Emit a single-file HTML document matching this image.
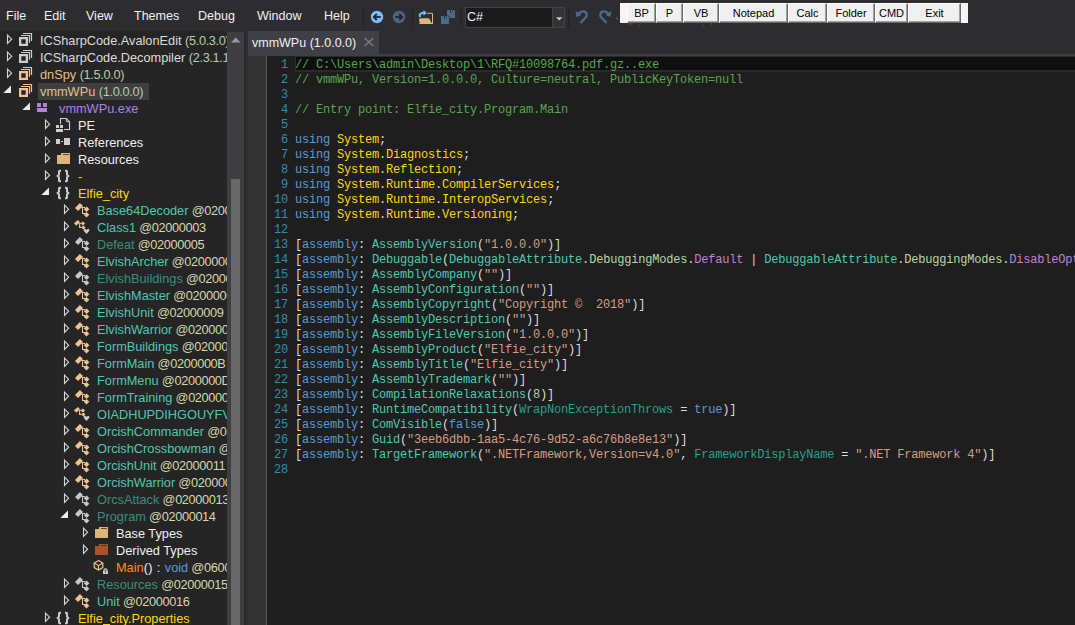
<!DOCTYPE html>
<html><head><meta charset="utf-8">
<style>
*{margin:0;padding:0;box-sizing:border-box}
html,body{width:1075px;height:625px;overflow:hidden;background:#2d2d30}
body{position:relative;font-family:"Liberation Sans",sans-serif;font-size:12.5px;color:#f1f1f1}
.a{position:absolute}
svg{overflow:visible}
.menu{position:absolute;top:7px;height:18px;line-height:18px;font-size:12.5px;color:#f1f1f1;white-space:nowrap}
.sep{position:absolute;top:8px;width:1px;height:19px;background:#222225}
/* tree */
#tree{position:absolute;left:0;top:31px;width:227px;height:594px;background:#252526;overflow:hidden}
.r{position:absolute;height:17px;line-height:17px;white-space:nowrap;font-size:12.75px}
.tk{letter-spacing:-0.35px}
/* scrollbar */
#sb{position:absolute;left:227px;top:32px;width:17px;height:593px;background:#3e3e42}
#thumb{position:absolute;left:4px;top:147px;width:9px;height:460px;background:#686868}
/* editor */
#tab{position:absolute;left:248px;top:31px;width:131px;height:25px;background:#3f3f46}
#tabline{position:absolute;left:248px;top:54px;width:827px;height:2px;background:#3f3f46}
#ed{position:absolute;left:248px;top:56px;width:827px;height:569px;background:#1e1e1e;overflow:hidden}
#margin{position:absolute;left:0;top:0;width:18px;height:569px;background:#333333}
#mline{position:absolute;left:18px;top:0;width:1px;height:569px;background:#5a5a5a}
.ln{position:absolute;left:19px;width:21px;text-align:right;color:#2b91af}
.cl{position:absolute;left:47px;white-space:pre;color:#dcdcdc}
.code{font-family:"Liberation Mono",monospace;font-size:12px;letter-spacing:-0.2px;line-height:15px;height:15px}
.c{color:#57a64a}.k{color:#569cd6}.n{color:#ffd700}.t{color:#4ec9b0}.s{color:#d69d85}
.e{color:#b8d7a3}.f{color:#c77fd9}.p{color:#2a9f8b}.num{color:#b5cea8}
.btn{position:absolute;top:3px;height:20px;background:#f0f0f0;border-top:1px solid #fff;border-left:1px solid #fff;border-right:1px solid #696969;border-bottom:1px solid #696969;box-shadow:inset -1px -1px 0 #a0a0a0;color:#000;font-family:"Liberation Sans",sans-serif;font-size:11px;text-align:center;line-height:18px}
</style></head><body>
<!-- menu -->
<div class="menu" style="left:6px">File</div>
<div class="menu" style="left:44px">Edit</div>
<div class="menu" style="left:86px">View</div>
<div class="menu" style="left:134px">Themes</div>
<div class="menu" style="left:198px">Debug</div>
<div class="menu" style="left:257px">Window</div>
<div class="menu" style="left:324px">Help</div>
<div class="sep" style="left:363px"></div>
<div class="sep" style="left:412px"></div>
<div class="sep" style="left:461px"></div>
<div class="sep" style="left:568px"></div>


<!-- toolbar icons -->
<svg class="a" style="left:370px;top:10px" width="14" height="14" viewBox="0 0 14 14"><circle cx="7" cy="7" r="6.2" fill="#75beff"/><path d="M4 7 H10.8" stroke="#252526" stroke-width="1.8"/><path d="M6.8 4 L3.8 7 L6.8 10" fill="none" stroke="#252526" stroke-width="1.8"/></svg>
<svg class="a" style="left:392px;top:10px" width="14" height="14" viewBox="0 0 14 14"><circle cx="7" cy="7" r="6.2" fill="#4a6582"/><path d="M3.2 7 H10" stroke="#252526" stroke-width="1.8"/><path d="M7.2 4 L10.2 7 L7.2 10" fill="none" stroke="#252526" stroke-width="1.8"/></svg>
<svg class="a" style="left:418px;top:9px" width="17" height="17" viewBox="0 0 17 17"><path d="M9 4.3 H14.5 V15" fill="none" stroke="#dcb67a" stroke-width="1"/><path d="M1 9.8 H2.2 L2.8 9.3 H11 L13.8 14.2 H1.6 Z" fill="#dcb67a"/><path d="M1.5 14.5 H15" stroke="#dcb67a" stroke-width="1"/><path d="M2.5 8 Q0.5 6 3 4.5 Q5 3.5 7 4" fill="none" stroke="#75beff" stroke-width="2"/><path d="M5.5 1 L8.8 4 L5.5 6.8 Z" fill="#75beff"/></svg>
<svg class="a" style="left:440px;top:9px" width="17" height="17" viewBox="0 0 17 17"><path d="M7 1 H14 L15 2 V9 H7 Z" fill="#4e6a8a"/><rect x="10" y="1" width="2.5" height="2.5" fill="#2d2d30"/><rect x="11" y="1.3" width="1" height="1.6" fill="#6a86a6"/><path d="M0.5 6.5 H8.5 L9.5 7.5 V15.5 H0.5 Z" fill="#2d2d30"/><path d="M1 7 H8 L9 8 V15 H1 Z" fill="#4e6a8a"/><rect x="4" y="7" width="2.5" height="2.5" fill="#2d2d30"/><rect x="5" y="7.3" width="1" height="1.6" fill="#6a86a6"/></svg>
<svg class="a" style="left:575px;top:9px" width="15" height="16" viewBox="0 0 15 16"><path d="M3.5 5 Q6 1.5 9.5 2.5 Q12.5 4 11.5 7.5 L5.5 14" fill="none" stroke="#4e6a8a" stroke-width="2.2"/><path d="M0.5 2 L1.5 8 L6.5 6 Z" fill="#4e6a8a"/></svg>
<svg class="a" style="left:597px;top:9px" width="15" height="16" viewBox="0 0 15 16"><path d="M11.5 5 Q9 1.5 5.5 2.5 Q2.5 4 3.5 7.5 L9.5 14" fill="none" stroke="#4e6a8a" stroke-width="2.2"/><path d="M14.5 2 L13.5 8 L8.5 6 Z" fill="#4e6a8a"/></svg>
<svg class="a" style="left:615px;top:11px" width="6" height="12" viewBox="0 0 6 12"><path d="M1 6 L3 9" fill="none" stroke="#45505c" stroke-width="1.4"/></svg>

<!-- combobox -->
<div class="a" style="left:465px;top:7px;width:100px;height:21px;background:#1b1b1c;border:1px solid #434346"></div>
<div class="a" style="left:552px;top:8px;width:12px;height:19px;background:#333337;border-left:1px solid #434346"></div>
<svg class="a" style="left:556px;top:17px" width="7" height="5" viewBox="0 0 7 5"><path d="M0 0.3 H6.5 L3.25 3.6 Z" fill="#c8c8c8"/></svg>
<div class="a" style="left:467px;top:9px;font-size:12.5px;color:#f1f1f1;line-height:17px">C#</div>

<!-- button panel -->
<svg class="a" style="left:625px;top:22px" width="100" height="6" viewBox="0 0 100 6"><ellipse cx="5" cy="1" rx="3" ry="1.6" fill="#8a2a2a"/><rect x="14" y="2" width="1" height="3" fill="#3c3c40"/><rect x="78" y="2" width="1" height="3" fill="#3c3c40"/><rect x="86" y="1" width="1" height="2" fill="#4a4a50"/></svg>

<div class="a" style="left:620px;top:3px;width:348px;height:20px;background:#f5f5f5"></div>
<div class="btn" style="left:627px;width:29px">BP</div>
<div class="btn" style="left:656px;width:27px">P</div>
<div class="btn" style="left:683px;width:36px">VB</div>
<div class="btn" style="left:719px;width:69px">Notepad</div>
<div class="btn" style="left:788px;width:39px">Calc</div>
<div class="btn" style="left:827px;width:48px">Folder</div>
<div class="btn" style="left:875px;width:33px">CMD</div>
<div class="btn" style="left:908px;width:53px">Exit</div>

<div id="tree">
<svg class="a" style="left:0px;top:1px" width="14" height="16" viewBox="0 0 14 16" ><path d="M7.5 3.1 L11.6 7.2 L7.5 11.3 Z" fill="none" stroke="#d8d8d8" stroke-width="1.1" stroke-linejoin="miter"/></svg><svg class="a" style="left:18px;top:1px" width="16" height="16" viewBox="0 0 16 16" ><path d="M1 5 H10 V14 H1 Z M3.3 7.3 V11.7 H7.7 V7.3 Z" fill="#cdcdcd" fill-rule="evenodd"/><path d="M2.9 3.5 H11.5 V10.8" fill="none" stroke="#cdcdcd" stroke-width="1.2"/><path d="M5 1.5 H13.5 V8.9" fill="none" stroke="#cdcdcd" stroke-width="1.2"/></svg><div class="r" style="left:40px;top:1px"><span style="color:#dcdcdc">ICSharpCode.AvalonEdit </span><span class="tk" style="color:#b5cea8">(5.0.3.0)</span></div>
<svg class="a" style="left:0px;top:18px" width="14" height="16" viewBox="0 0 14 16" ><path d="M7.5 3.1 L11.6 7.2 L7.5 11.3 Z" fill="none" stroke="#d8d8d8" stroke-width="1.1" stroke-linejoin="miter"/></svg><svg class="a" style="left:18px;top:18px" width="16" height="16" viewBox="0 0 16 16" ><path d="M1 5 H10 V14 H1 Z M3.3 7.3 V11.7 H7.7 V7.3 Z" fill="#cdcdcd" fill-rule="evenodd"/><path d="M2.9 3.5 H11.5 V10.8" fill="none" stroke="#cdcdcd" stroke-width="1.2"/><path d="M5 1.5 H13.5 V8.9" fill="none" stroke="#cdcdcd" stroke-width="1.2"/></svg><div class="r" style="left:40px;top:18px"><span style="color:#dcdcdc">ICSharpCode.Decompiler </span><span class="tk" style="color:#b5cea8">(2.3.1.1)</span></div>
<svg class="a" style="left:0px;top:35px" width="14" height="16" viewBox="0 0 14 16" ><path d="M7.5 3.1 L11.6 7.2 L7.5 11.3 Z" fill="none" stroke="#d8d8d8" stroke-width="1.1" stroke-linejoin="miter"/></svg><svg class="a" style="left:18px;top:35px" width="16" height="16" viewBox="0 0 16 16" ><path d="M1 5 H10 V14 H1 Z M3.3 7.3 V11.7 H7.7 V7.3 Z" fill="#f0c48e" fill-rule="evenodd"/><path d="M2.9 3.5 H11.5 V10.8" fill="none" stroke="#f0c48e" stroke-width="1.2"/><path d="M5 1.5 H13.5 V8.9" fill="none" stroke="#f0c48e" stroke-width="1.2"/></svg><div class="r" style="left:40px;top:35px"><span style="color:#e0c08a">dnSpy </span><span class="tk" style="color:#b5cea8">(1.5.0.0)</span></div>
<div class="a" style="left:38px;top:52px;width:111px;height:17px;background:#3f3f40"></div>
<svg class="a" style="left:0px;top:52px" width="14" height="16" viewBox="0 0 14 16" ><path d="M3.3 10 L11 2.4 V10 Z" fill="#ececec"/></svg><svg class="a" style="left:18px;top:52px" width="16" height="16" viewBox="0 0 16 16" ><path d="M1 5 H10 V14 H1 Z M3.3 7.3 V11.7 H7.7 V7.3 Z" fill="#f0c48e" fill-rule="evenodd"/><path d="M2.9 3.5 H11.5 V10.8" fill="none" stroke="#f0c48e" stroke-width="1.2"/><path d="M5 1.5 H13.5 V8.9" fill="none" stroke="#f0c48e" stroke-width="1.2"/></svg><div class="r" style="left:40px;top:52px"><span style="color:#e0c08a">vmmWPu </span><span class="tk" style="color:#b5cea8">(1.0.0.0)</span></div>
<svg class="a" style="left:19px;top:69px" width="14" height="16" viewBox="0 0 14 16" ><path d="M3.3 10 L11 2.4 V10 Z" fill="#ececec"/></svg><svg class="a" style="left:37px;top:69px" width="12" height="14" viewBox="0 0 12 14" ><rect x="0" y="3" width="4" height="4" fill="#b482dc"/><rect x="6" y="3" width="4" height="4" fill="#b482dc"/><rect x="0" y="8" width="10" height="4" fill="#b482dc"/></svg><div class="r" style="left:59px;top:69px"><span style="color:#a884e8">vmmWPu.exe</span></div>
<svg class="a" style="left:38px;top:86px" width="14" height="16" viewBox="0 0 14 16" ><path d="M7.5 3.1 L11.6 7.2 L7.5 11.3 Z" fill="none" stroke="#d8d8d8" stroke-width="1.1" stroke-linejoin="miter"/></svg><svg class="a" style="left:56px;top:86px" width="15" height="16" viewBox="0 0 15 16" ><path d="M4.5 7 V1.5 H10.3 L13.5 4.7 V12.5 H8" fill="none" stroke="#cfcfcf" stroke-width="1.1"/><path d="M10.3 1.5 V4.7 H13.5" fill="none" stroke="#cfcfcf" stroke-width="0.9"/><rect x="0" y="8" width="3" height="3" fill="#cfcfcf"/><rect x="4" y="8" width="3" height="3" fill="#cfcfcf"/><rect x="0" y="12" width="7" height="3" fill="#cfcfcf"/></svg><div class="r" style="left:78px;top:86px"><span style="color:#f1f1f1">PE</span></div>
<svg class="a" style="left:38px;top:103px" width="14" height="16" viewBox="0 0 14 16" ><path d="M7.5 3.1 L11.6 7.2 L7.5 11.3 Z" fill="none" stroke="#d8d8d8" stroke-width="1.1" stroke-linejoin="miter"/></svg><svg class="a" style="left:56px;top:103px" width="15" height="14" viewBox="0 0 15 14" ><rect x="0" y="5" width="4" height="5" fill="#cfcfcf"/><rect x="5" y="7" width="2" height="1" fill="#cfcfcf"/><rect x="8" y="4" width="6" height="7" fill="#cfcfcf"/></svg><div class="r" style="left:78px;top:103px"><span style="color:#f1f1f1">References</span></div>
<svg class="a" style="left:38px;top:120px" width="14" height="16" viewBox="0 0 14 16" ><path d="M7.5 3.1 L11.6 7.2 L7.5 11.3 Z" fill="none" stroke="#d8d8d8" stroke-width="1.1" stroke-linejoin="miter"/></svg><svg class="a" style="left:56px;top:120px" width="15" height="15" viewBox="0 0 15 15" ><rect x="1" y="4" width="13" height="9" fill="#dcb67a"/><rect x="5" y="2" width="9" height="2" fill="#dcb67a"/><rect x="7" y="3" width="6" height="1" fill="#3a3020" opacity="0.8"/></svg><div class="r" style="left:78px;top:120px"><span style="color:#f1f1f1">Resources</span></div>
<svg class="a" style="left:38px;top:137px" width="14" height="16" viewBox="0 0 14 16" ><path d="M7.5 3.1 L11.6 7.2 L7.5 11.3 Z" fill="none" stroke="#d8d8d8" stroke-width="1.1" stroke-linejoin="miter"/></svg><svg class="a" style="left:56px;top:137px" width="15" height="16" viewBox="0 0 15 16" ><path d="M5 2.7 H3.8 Q3 2.7 3 3.6 V6.6 L1.6 8 L3 9.4 V12.4 Q3 13.3 3.8 13.3 H5" fill="none" stroke="#cacaca" stroke-width="2"/><path d="M9 2.7 H10.2 Q11 2.7 11 3.6 V6.6 L12.4 8 L11 9.4 V12.4 Q11 13.3 10.2 13.3 H9" fill="none" stroke="#cacaca" stroke-width="2"/></svg><div class="r" style="left:78px;top:137px"><span style="color:#ffd700">-</span></div>
<svg class="a" style="left:38px;top:154px" width="14" height="16" viewBox="0 0 14 16" ><path d="M3.3 10 L11 2.4 V10 Z" fill="#ececec"/></svg><svg class="a" style="left:56px;top:154px" width="15" height="16" viewBox="0 0 15 16" ><path d="M5 2.7 H3.8 Q3 2.7 3 3.6 V6.6 L1.6 8 L3 9.4 V12.4 Q3 13.3 3.8 13.3 H5" fill="none" stroke="#cacaca" stroke-width="2"/><path d="M9 2.7 H10.2 Q11 2.7 11 3.6 V6.6 L12.4 8 L11 9.4 V12.4 Q11 13.3 10.2 13.3 H9" fill="none" stroke="#cacaca" stroke-width="2"/></svg><div class="r" style="left:78px;top:154px"><span style="color:#ffd700">Elfie_city</span></div>
<svg class="a" style="left:57px;top:171px" width="14" height="16" viewBox="0 0 14 16" ><path d="M7.5 3.1 L11.6 7.2 L7.5 11.3 Z" fill="none" stroke="#d8d8d8" stroke-width="1.1" stroke-linejoin="miter"/></svg><svg class="a" style="left:75px;top:171px" width="16" height="16" viewBox="0 0 16 16" ><path d="M0 5.9 L4.9 1 L8 4.1 L3.1 9 Z" fill="#f0c48e"/><path d="M11.6 4.4 L14.4 7.2 L11.6 10 L8.8 7.2 Z" fill="#f0c48e"/><path d="M11.5 9.9 L14.3 12.7 L11.5 15.5 L8.7 12.7 Z" fill="#f0c48e"/><path d="M6.5 5.5 H10 M7.5 5.5 V11.5 H10" fill="none" stroke="#f0c48e" stroke-width="1.1"/></svg><div class="r" style="left:97px;top:171px"><span style="color:#4ec9b0">Base64Decoder</span><span class="tk" style="color:#d7d7a8"> @02000002</span></div>
<svg class="a" style="left:57px;top:188px" width="14" height="16" viewBox="0 0 14 16" ><path d="M7.5 3.1 L11.6 7.2 L7.5 11.3 Z" fill="none" stroke="#d8d8d8" stroke-width="1.1" stroke-linejoin="miter"/></svg><svg class="a" style="left:75px;top:188px" width="16" height="16" viewBox="0 0 16 16" ><path d="M-1 4.3 L2.9 1.1 L4.9 2.9 L1.2 6.8 Z" fill="#f0c48e"/><path d="M7.9 2.5 L10 4.5 L7.9 6.5 L5.8 4.5 Z" fill="#f0c48e"/><path d="M8.4 6.6 L10.5 8.6 L8.4 10.6 L6.3 8.6 Z" fill="#f0c48e"/><path d="M3.5 4.3 H6.5 M4.6 4.3 V8.4 H6.5" fill="none" stroke="#f0c48e" stroke-width="1.1"/><path d="M11.5 11 Q10.3 9.6 9.2 9.9 Q8.3 10.3 8.7 11.7 L11.5 15 L14.3 11.7 Q14.7 10.3 13.8 9.9 Q12.7 9.6 11.5 11 Z" fill="#cdcdcd"/></svg><div class="r" style="left:97px;top:188px"><span style="color:#4ec9b0">Class1</span><span class="tk" style="color:#d7d7a8"> @02000003</span></div>
<svg class="a" style="left:57px;top:205px" width="14" height="16" viewBox="0 0 14 16" ><path d="M7.5 3.1 L11.6 7.2 L7.5 11.3 Z" fill="none" stroke="#d8d8d8" stroke-width="1.1" stroke-linejoin="miter"/></svg><svg class="a" style="left:75px;top:205px" width="16" height="16" viewBox="0 0 16 16" ><path d="M0 5.9 L4.9 1 L8 4.1 L3.1 9 Z" fill="#c8c8c8"/><path d="M11.6 4.4 L14.4 7.2 L11.6 10 L8.8 7.2 Z" fill="#c8c8c8"/><path d="M11.5 9.9 L14.3 12.7 L11.5 15.5 L8.7 12.7 Z" fill="#c8c8c8"/><path d="M6.5 5.5 H10 M7.5 5.5 V11.5 H10" fill="none" stroke="#c8c8c8" stroke-width="1.1"/></svg><div class="r" style="left:97px;top:205px"><span style="color:#378f7d">Defeat</span><span class="tk" style="color:#d7d7a8"> @02000005</span></div>
<svg class="a" style="left:57px;top:222px" width="14" height="16" viewBox="0 0 14 16" ><path d="M7.5 3.1 L11.6 7.2 L7.5 11.3 Z" fill="none" stroke="#d8d8d8" stroke-width="1.1" stroke-linejoin="miter"/></svg><svg class="a" style="left:75px;top:222px" width="16" height="16" viewBox="0 0 16 16" ><path d="M0 5.9 L4.9 1 L8 4.1 L3.1 9 Z" fill="#f0c48e"/><path d="M11.6 4.4 L14.4 7.2 L11.6 10 L8.8 7.2 Z" fill="#f0c48e"/><path d="M11.5 9.9 L14.3 12.7 L11.5 15.5 L8.7 12.7 Z" fill="#f0c48e"/><path d="M6.5 5.5 H10 M7.5 5.5 V11.5 H10" fill="none" stroke="#f0c48e" stroke-width="1.1"/></svg><div class="r" style="left:97px;top:222px"><span style="color:#4ec9b0">ElvishArcher</span><span class="tk" style="color:#d7d7a8"> @02000006</span></div>
<svg class="a" style="left:57px;top:239px" width="14" height="16" viewBox="0 0 14 16" ><path d="M7.5 3.1 L11.6 7.2 L7.5 11.3 Z" fill="none" stroke="#d8d8d8" stroke-width="1.1" stroke-linejoin="miter"/></svg><svg class="a" style="left:75px;top:239px" width="16" height="16" viewBox="0 0 16 16" ><path d="M0 5.9 L4.9 1 L8 4.1 L3.1 9 Z" fill="#c8c8c8"/><path d="M11.6 4.4 L14.4 7.2 L11.6 10 L8.8 7.2 Z" fill="#c8c8c8"/><path d="M11.5 9.9 L14.3 12.7 L11.5 15.5 L8.7 12.7 Z" fill="#c8c8c8"/><path d="M6.5 5.5 H10 M7.5 5.5 V11.5 H10" fill="none" stroke="#c8c8c8" stroke-width="1.1"/></svg><div class="r" style="left:97px;top:239px"><span style="color:#378f7d">ElvishBuildings</span><span class="tk" style="color:#d7d7a8"> @02000007</span></div>
<svg class="a" style="left:57px;top:256px" width="14" height="16" viewBox="0 0 14 16" ><path d="M7.5 3.1 L11.6 7.2 L7.5 11.3 Z" fill="none" stroke="#d8d8d8" stroke-width="1.1" stroke-linejoin="miter"/></svg><svg class="a" style="left:75px;top:256px" width="16" height="16" viewBox="0 0 16 16" ><path d="M0 5.9 L4.9 1 L8 4.1 L3.1 9 Z" fill="#f0c48e"/><path d="M11.6 4.4 L14.4 7.2 L11.6 10 L8.8 7.2 Z" fill="#f0c48e"/><path d="M11.5 9.9 L14.3 12.7 L11.5 15.5 L8.7 12.7 Z" fill="#f0c48e"/><path d="M6.5 5.5 H10 M7.5 5.5 V11.5 H10" fill="none" stroke="#f0c48e" stroke-width="1.1"/></svg><div class="r" style="left:97px;top:256px"><span style="color:#4ec9b0">ElvishMaster</span><span class="tk" style="color:#d7d7a8"> @02000008</span></div>
<svg class="a" style="left:57px;top:273px" width="14" height="16" viewBox="0 0 14 16" ><path d="M7.5 3.1 L11.6 7.2 L7.5 11.3 Z" fill="none" stroke="#d8d8d8" stroke-width="1.1" stroke-linejoin="miter"/></svg><svg class="a" style="left:75px;top:273px" width="16" height="16" viewBox="0 0 16 16" ><path d="M0 5.9 L4.9 1 L8 4.1 L3.1 9 Z" fill="#f0c48e"/><path d="M11.6 4.4 L14.4 7.2 L11.6 10 L8.8 7.2 Z" fill="#f0c48e"/><path d="M11.5 9.9 L14.3 12.7 L11.5 15.5 L8.7 12.7 Z" fill="#f0c48e"/><path d="M6.5 5.5 H10 M7.5 5.5 V11.5 H10" fill="none" stroke="#f0c48e" stroke-width="1.1"/></svg><div class="r" style="left:97px;top:273px"><span style="color:#4ec9b0">ElvishUnit</span><span class="tk" style="color:#d7d7a8"> @02000009</span></div>
<svg class="a" style="left:57px;top:290px" width="14" height="16" viewBox="0 0 14 16" ><path d="M7.5 3.1 L11.6 7.2 L7.5 11.3 Z" fill="none" stroke="#d8d8d8" stroke-width="1.1" stroke-linejoin="miter"/></svg><svg class="a" style="left:75px;top:290px" width="16" height="16" viewBox="0 0 16 16" ><path d="M0 5.9 L4.9 1 L8 4.1 L3.1 9 Z" fill="#f0c48e"/><path d="M11.6 4.4 L14.4 7.2 L11.6 10 L8.8 7.2 Z" fill="#f0c48e"/><path d="M11.5 9.9 L14.3 12.7 L11.5 15.5 L8.7 12.7 Z" fill="#f0c48e"/><path d="M6.5 5.5 H10 M7.5 5.5 V11.5 H10" fill="none" stroke="#f0c48e" stroke-width="1.1"/></svg><div class="r" style="left:97px;top:290px"><span style="color:#4ec9b0">ElvishWarrior</span><span class="tk" style="color:#d7d7a8"> @0200000A</span></div>
<svg class="a" style="left:57px;top:307px" width="14" height="16" viewBox="0 0 14 16" ><path d="M7.5 3.1 L11.6 7.2 L7.5 11.3 Z" fill="none" stroke="#d8d8d8" stroke-width="1.1" stroke-linejoin="miter"/></svg><svg class="a" style="left:75px;top:307px" width="16" height="16" viewBox="0 0 16 16" ><path d="M0 5.9 L4.9 1 L8 4.1 L3.1 9 Z" fill="#f0c48e"/><path d="M11.6 4.4 L14.4 7.2 L11.6 10 L8.8 7.2 Z" fill="#f0c48e"/><path d="M11.5 9.9 L14.3 12.7 L11.5 15.5 L8.7 12.7 Z" fill="#f0c48e"/><path d="M6.5 5.5 H10 M7.5 5.5 V11.5 H10" fill="none" stroke="#f0c48e" stroke-width="1.1"/></svg><div class="r" style="left:97px;top:307px"><span style="color:#4ec9b0">FormBuildings</span><span class="tk" style="color:#d7d7a8"> @0200000C</span></div>
<svg class="a" style="left:57px;top:324px" width="14" height="16" viewBox="0 0 14 16" ><path d="M7.5 3.1 L11.6 7.2 L7.5 11.3 Z" fill="none" stroke="#d8d8d8" stroke-width="1.1" stroke-linejoin="miter"/></svg><svg class="a" style="left:75px;top:324px" width="16" height="16" viewBox="0 0 16 16" ><path d="M0 5.9 L4.9 1 L8 4.1 L3.1 9 Z" fill="#f0c48e"/><path d="M11.6 4.4 L14.4 7.2 L11.6 10 L8.8 7.2 Z" fill="#f0c48e"/><path d="M11.5 9.9 L14.3 12.7 L11.5 15.5 L8.7 12.7 Z" fill="#f0c48e"/><path d="M6.5 5.5 H10 M7.5 5.5 V11.5 H10" fill="none" stroke="#f0c48e" stroke-width="1.1"/></svg><div class="r" style="left:97px;top:324px"><span style="color:#4ec9b0">FormMain</span><span class="tk" style="color:#d7d7a8"> @0200000B</span></div>
<svg class="a" style="left:57px;top:341px" width="14" height="16" viewBox="0 0 14 16" ><path d="M7.5 3.1 L11.6 7.2 L7.5 11.3 Z" fill="none" stroke="#d8d8d8" stroke-width="1.1" stroke-linejoin="miter"/></svg><svg class="a" style="left:75px;top:341px" width="16" height="16" viewBox="0 0 16 16" ><path d="M0 5.9 L4.9 1 L8 4.1 L3.1 9 Z" fill="#f0c48e"/><path d="M11.6 4.4 L14.4 7.2 L11.6 10 L8.8 7.2 Z" fill="#f0c48e"/><path d="M11.5 9.9 L14.3 12.7 L11.5 15.5 L8.7 12.7 Z" fill="#f0c48e"/><path d="M6.5 5.5 H10 M7.5 5.5 V11.5 H10" fill="none" stroke="#f0c48e" stroke-width="1.1"/></svg><div class="r" style="left:97px;top:341px"><span style="color:#4ec9b0">FormMenu</span><span class="tk" style="color:#d7d7a8"> @0200000D</span></div>
<svg class="a" style="left:57px;top:358px" width="14" height="16" viewBox="0 0 14 16" ><path d="M7.5 3.1 L11.6 7.2 L7.5 11.3 Z" fill="none" stroke="#d8d8d8" stroke-width="1.1" stroke-linejoin="miter"/></svg><svg class="a" style="left:75px;top:358px" width="16" height="16" viewBox="0 0 16 16" ><path d="M0 5.9 L4.9 1 L8 4.1 L3.1 9 Z" fill="#f0c48e"/><path d="M11.6 4.4 L14.4 7.2 L11.6 10 L8.8 7.2 Z" fill="#f0c48e"/><path d="M11.5 9.9 L14.3 12.7 L11.5 15.5 L8.7 12.7 Z" fill="#f0c48e"/><path d="M6.5 5.5 H10 M7.5 5.5 V11.5 H10" fill="none" stroke="#f0c48e" stroke-width="1.1"/></svg><div class="r" style="left:97px;top:358px"><span style="color:#4ec9b0">FormTraining</span><span class="tk" style="color:#d7d7a8"> @0200000E</span></div>
<svg class="a" style="left:57px;top:375px" width="14" height="16" viewBox="0 0 14 16" ><path d="M7.5 3.1 L11.6 7.2 L7.5 11.3 Z" fill="none" stroke="#d8d8d8" stroke-width="1.1" stroke-linejoin="miter"/></svg><svg class="a" style="left:75px;top:375px" width="16" height="16" viewBox="0 0 16 16" ><path d="M-1 4.3 L2.9 1.1 L4.9 2.9 L1.2 6.8 Z" fill="#f0c48e"/><path d="M7.9 2.5 L10 4.5 L7.9 6.5 L5.8 4.5 Z" fill="#f0c48e"/><path d="M8.4 6.6 L10.5 8.6 L8.4 10.6 L6.3 8.6 Z" fill="#f0c48e"/><path d="M3.5 4.3 H6.5 M4.6 4.3 V8.4 H6.5" fill="none" stroke="#f0c48e" stroke-width="1.1"/><path d="M11.5 11 Q10.3 9.6 9.2 9.9 Q8.3 10.3 8.7 11.7 L11.5 15 L14.3 11.7 Q14.7 10.3 13.8 9.9 Q12.7 9.6 11.5 11 Z" fill="#cdcdcd"/></svg><div class="r" style="left:97px;top:375px"><span style="color:#4ec9b0">OIADHUPDIHGOUYFVDGFJ</span><span class="tk" style="color:#d7d7a8"> @0200000F</span></div>
<svg class="a" style="left:57px;top:392px" width="14" height="16" viewBox="0 0 14 16" ><path d="M7.5 3.1 L11.6 7.2 L7.5 11.3 Z" fill="none" stroke="#d8d8d8" stroke-width="1.1" stroke-linejoin="miter"/></svg><svg class="a" style="left:75px;top:392px" width="16" height="16" viewBox="0 0 16 16" ><path d="M0 5.9 L4.9 1 L8 4.1 L3.1 9 Z" fill="#f0c48e"/><path d="M11.6 4.4 L14.4 7.2 L11.6 10 L8.8 7.2 Z" fill="#f0c48e"/><path d="M11.5 9.9 L14.3 12.7 L11.5 15.5 L8.7 12.7 Z" fill="#f0c48e"/><path d="M6.5 5.5 H10 M7.5 5.5 V11.5 H10" fill="none" stroke="#f0c48e" stroke-width="1.1"/></svg><div class="r" style="left:97px;top:392px"><span style="color:#4ec9b0">OrcishCommander</span><span class="tk" style="color:#d7d7a8"> @02000010</span></div>
<svg class="a" style="left:57px;top:409px" width="14" height="16" viewBox="0 0 14 16" ><path d="M7.5 3.1 L11.6 7.2 L7.5 11.3 Z" fill="none" stroke="#d8d8d8" stroke-width="1.1" stroke-linejoin="miter"/></svg><svg class="a" style="left:75px;top:409px" width="16" height="16" viewBox="0 0 16 16" ><path d="M0 5.9 L4.9 1 L8 4.1 L3.1 9 Z" fill="#f0c48e"/><path d="M11.6 4.4 L14.4 7.2 L11.6 10 L8.8 7.2 Z" fill="#f0c48e"/><path d="M11.5 9.9 L14.3 12.7 L11.5 15.5 L8.7 12.7 Z" fill="#f0c48e"/><path d="M6.5 5.5 H10 M7.5 5.5 V11.5 H10" fill="none" stroke="#f0c48e" stroke-width="1.1"/></svg><div class="r" style="left:97px;top:409px"><span style="color:#4ec9b0">OrcishCrossbowman</span><span class="tk" style="color:#d7d7a8"> @02000012</span></div>
<svg class="a" style="left:57px;top:426px" width="14" height="16" viewBox="0 0 14 16" ><path d="M7.5 3.1 L11.6 7.2 L7.5 11.3 Z" fill="none" stroke="#d8d8d8" stroke-width="1.1" stroke-linejoin="miter"/></svg><svg class="a" style="left:75px;top:426px" width="16" height="16" viewBox="0 0 16 16" ><path d="M0 5.9 L4.9 1 L8 4.1 L3.1 9 Z" fill="#f0c48e"/><path d="M11.6 4.4 L14.4 7.2 L11.6 10 L8.8 7.2 Z" fill="#f0c48e"/><path d="M11.5 9.9 L14.3 12.7 L11.5 15.5 L8.7 12.7 Z" fill="#f0c48e"/><path d="M6.5 5.5 H10 M7.5 5.5 V11.5 H10" fill="none" stroke="#f0c48e" stroke-width="1.1"/></svg><div class="r" style="left:97px;top:426px"><span style="color:#4ec9b0">OrcishUnit</span><span class="tk" style="color:#d7d7a8"> @02000011</span></div>
<svg class="a" style="left:57px;top:443px" width="14" height="16" viewBox="0 0 14 16" ><path d="M7.5 3.1 L11.6 7.2 L7.5 11.3 Z" fill="none" stroke="#d8d8d8" stroke-width="1.1" stroke-linejoin="miter"/></svg><svg class="a" style="left:75px;top:443px" width="16" height="16" viewBox="0 0 16 16" ><path d="M0 5.9 L4.9 1 L8 4.1 L3.1 9 Z" fill="#f0c48e"/><path d="M11.6 4.4 L14.4 7.2 L11.6 10 L8.8 7.2 Z" fill="#f0c48e"/><path d="M11.5 9.9 L14.3 12.7 L11.5 15.5 L8.7 12.7 Z" fill="#f0c48e"/><path d="M6.5 5.5 H10 M7.5 5.5 V11.5 H10" fill="none" stroke="#f0c48e" stroke-width="1.1"/></svg><div class="r" style="left:97px;top:443px"><span style="color:#4ec9b0">OrcishWarrior</span><span class="tk" style="color:#d7d7a8"> @02000013</span></div>
<svg class="a" style="left:57px;top:460px" width="14" height="16" viewBox="0 0 14 16" ><path d="M7.5 3.1 L11.6 7.2 L7.5 11.3 Z" fill="none" stroke="#d8d8d8" stroke-width="1.1" stroke-linejoin="miter"/></svg><svg class="a" style="left:75px;top:460px" width="16" height="16" viewBox="0 0 16 16" ><path d="M0 5.9 L4.9 1 L8 4.1 L3.1 9 Z" fill="#c8c8c8"/><path d="M11.6 4.4 L14.4 7.2 L11.6 10 L8.8 7.2 Z" fill="#c8c8c8"/><path d="M11.5 9.9 L14.3 12.7 L11.5 15.5 L8.7 12.7 Z" fill="#c8c8c8"/><path d="M6.5 5.5 H10 M7.5 5.5 V11.5 H10" fill="none" stroke="#c8c8c8" stroke-width="1.1"/></svg><div class="r" style="left:97px;top:460px"><span style="color:#378f7d">OrcsAttack</span><span class="tk" style="color:#d7d7a8"> @02000013</span></div>
<svg class="a" style="left:57px;top:477px" width="14" height="16" viewBox="0 0 14 16" ><path d="M3.3 10 L11 2.4 V10 Z" fill="#ececec"/></svg><svg class="a" style="left:75px;top:477px" width="16" height="16" viewBox="0 0 16 16" ><path d="M0 5.9 L4.9 1 L8 4.1 L3.1 9 Z" fill="#c8c8c8"/><path d="M11.6 4.4 L14.4 7.2 L11.6 10 L8.8 7.2 Z" fill="#c8c8c8"/><path d="M11.5 9.9 L14.3 12.7 L11.5 15.5 L8.7 12.7 Z" fill="#c8c8c8"/><path d="M6.5 5.5 H10 M7.5 5.5 V11.5 H10" fill="none" stroke="#c8c8c8" stroke-width="1.1"/></svg><div class="r" style="left:97px;top:477px"><span style="color:#378f7d">Program</span><span class="tk" style="color:#d7d7a8"> @02000014</span></div>
<svg class="a" style="left:76px;top:494px" width="14" height="16" viewBox="0 0 14 16" ><path d="M7.5 3.1 L11.6 7.2 L7.5 11.3 Z" fill="none" stroke="#d8d8d8" stroke-width="1.1" stroke-linejoin="miter"/></svg><svg class="a" style="left:94px;top:494px" width="15" height="15" viewBox="0 0 15 15" ><rect x="1" y="4" width="13" height="9" fill="#dcb67a"/><rect x="5" y="2" width="9" height="2" fill="#dcb67a"/><rect x="7" y="3" width="6" height="1" fill="#3a3020" opacity="0.8"/></svg><div class="r" style="left:116px;top:494px"><span style="color:#f1f1f1">Base Types</span></div>
<svg class="a" style="left:76px;top:511px" width="14" height="16" viewBox="0 0 14 16" ><path d="M7.5 3.1 L11.6 7.2 L7.5 11.3 Z" fill="none" stroke="#d8d8d8" stroke-width="1.1" stroke-linejoin="miter"/></svg><svg class="a" style="left:94px;top:511px" width="15" height="15" viewBox="0 0 15 15" ><rect x="1" y="4" width="13" height="9" fill="#a9522d"/><rect x="5" y="2" width="9" height="2" fill="#a9522d"/><rect x="7" y="3" width="6" height="1" fill="#3a3020" opacity="0.8"/></svg><div class="r" style="left:116px;top:511px"><span style="color:#f1f1f1">Derived Types</span></div>
<svg class="a" style="left:94px;top:528px" width="16" height="16" viewBox="0 0 16 16" ><path d="M4.5 1.6 L8.8 4 V8.6 L4.5 11 L0.2 8.6 V4 Z" fill="none" stroke="#f0c48a" stroke-width="1.2"/><path d="M0.2 4 L4.5 6.6 L8.8 4 M4.5 6.6 V11" fill="none" stroke="#f0c48a" stroke-width="1.1"/><rect x="9" y="11.5" width="5" height="3.5" fill="#cdcdcd"/><path d="M10 11.5 V10.8 Q11.5 9 13 10.8 V11.5" fill="none" stroke="#cdcdcd" stroke-width="1.1"/><rect x="11" y="12.5" width="1" height="1.2" fill="#252526"/></svg><div class="r" style="left:116px;top:528px"><span style="color:#ff8c1a">Main</span><span style="color:#f1f1f1;letter-spacing:0.4px;word-spacing:0px">() : </span><span style="color:#569cd6">void</span><span class="tk" style="color:#d7d7a8"> @06000040</span></div>
<svg class="a" style="left:57px;top:545px" width="14" height="16" viewBox="0 0 14 16" ><path d="M7.5 3.1 L11.6 7.2 L7.5 11.3 Z" fill="none" stroke="#d8d8d8" stroke-width="1.1" stroke-linejoin="miter"/></svg><svg class="a" style="left:75px;top:545px" width="16" height="16" viewBox="0 0 16 16" ><path d="M0 5.9 L4.9 1 L8 4.1 L3.1 9 Z" fill="#c8c8c8"/><path d="M11.6 4.4 L14.4 7.2 L11.6 10 L8.8 7.2 Z" fill="#c8c8c8"/><path d="M11.5 9.9 L14.3 12.7 L11.5 15.5 L8.7 12.7 Z" fill="#c8c8c8"/><path d="M6.5 5.5 H10 M7.5 5.5 V11.5 H10" fill="none" stroke="#c8c8c8" stroke-width="1.1"/></svg><div class="r" style="left:97px;top:545px"><span style="color:#378f7d">Resources</span><span class="tk" style="color:#d7d7a8"> @02000015</span></div>
<svg class="a" style="left:57px;top:562px" width="14" height="16" viewBox="0 0 14 16" ><path d="M7.5 3.1 L11.6 7.2 L7.5 11.3 Z" fill="none" stroke="#d8d8d8" stroke-width="1.1" stroke-linejoin="miter"/></svg><svg class="a" style="left:75px;top:562px" width="16" height="16" viewBox="0 0 16 16" ><path d="M0 5.9 L4.9 1 L8 4.1 L3.1 9 Z" fill="#f0c48e"/><path d="M11.6 4.4 L14.4 7.2 L11.6 10 L8.8 7.2 Z" fill="#f0c48e"/><path d="M11.5 9.9 L14.3 12.7 L11.5 15.5 L8.7 12.7 Z" fill="#f0c48e"/><path d="M6.5 5.5 H10 M7.5 5.5 V11.5 H10" fill="none" stroke="#f0c48e" stroke-width="1.1"/></svg><div class="r" style="left:97px;top:562px"><span style="color:#4ec9b0">Unit</span><span class="tk" style="color:#d7d7a8"> @02000016</span></div>
<svg class="a" style="left:38px;top:579px" width="14" height="16" viewBox="0 0 14 16" ><path d="M7.5 3.1 L11.6 7.2 L7.5 11.3 Z" fill="none" stroke="#d8d8d8" stroke-width="1.1" stroke-linejoin="miter"/></svg><svg class="a" style="left:56px;top:579px" width="15" height="16" viewBox="0 0 15 16" ><path d="M5 2.7 H3.8 Q3 2.7 3 3.6 V6.6 L1.6 8 L3 9.4 V12.4 Q3 13.3 3.8 13.3 H5" fill="none" stroke="#cacaca" stroke-width="2"/><path d="M9 2.7 H10.2 Q11 2.7 11 3.6 V6.6 L12.4 8 L11 9.4 V12.4 Q11 13.3 10.2 13.3 H9" fill="none" stroke="#cacaca" stroke-width="2"/></svg><div class="r" style="left:78px;top:579px"><span style="color:#ffd700">Elfie<span style="display:inline-block;width:7px;height:13px;border-bottom:1px solid #ffd700;vertical-align:-2px"></span>city.Properties</span></div>
</div>

<div class="a" style="left:244px;top:31px;width:1px;height:594px;background:#27272a"></div>
<div id="sb"><div id="thumb"></div><svg class="a" style="left:4px;top:5px" width="10" height="6" viewBox="0 0 10 6"><path d="M0 5.5 L4.75 0.5 L9.5 5.5 Z" fill="#999999"/></svg></div>

<div id="tab"></div>
<div id="tabline"></div>
<div class="a" style="left:252px;top:35px;line-height:17px;font-size:12.5px;color:#f1f1f1">vmmWPu (1.0.0.0)</div>
<svg class="a" style="left:364px;top:37px" width="10" height="10" viewBox="0 0 10 10"><path d="M0.6 1 L9.4 9 M9.4 1 L0.6 9" stroke="#7c7c82" stroke-width="1.4"/></svg>
<div id="ed">
<div id="margin"></div><div id="mline"></div>
<div class="a" style="left:47px;top:0px;width:790px;height:16px;background:#0f0f0f;border-style:solid;border-color:#2a2a2a;border-width:1px 0 2px 1px"></div>
<div class="ln code" style="top:2.0px">1</div>
<div class="cl code" style="top:2.0px"><span class="c">// C:\Users\admin\Desktop\1\RFQ#10098764.pdf.gz..exe</span></div>
<div class="ln code" style="top:17.0px">2</div>
<div class="cl code" style="top:17.0px"><span class="c">// vmmWPu, Version=1.0.0.0, Culture=neutral, PublicKeyToken=null</span></div>
<div class="ln code" style="top:32.0px">3</div>
<div class="cl code" style="top:32.0px"></div>
<div class="ln code" style="top:47.0px">4</div>
<div class="cl code" style="top:47.0px"><span class="c">// Entry point: Elfie_city.Program.Main</span></div>
<div class="ln code" style="top:62.0px">5</div>
<div class="cl code" style="top:62.0px"></div>
<div class="ln code" style="top:77.0px">6</div>
<div class="cl code" style="top:77.0px"><span class="k">using</span> <span class="n">System</span>;</div>
<div class="ln code" style="top:92.0px">7</div>
<div class="cl code" style="top:92.0px"><span class="k">using</span> <span class="n">System</span>.<span class="n">Diagnostics</span>;</div>
<div class="ln code" style="top:107.0px">8</div>
<div class="cl code" style="top:107.0px"><span class="k">using</span> <span class="n">System</span>.<span class="n">Reflection</span>;</div>
<div class="ln code" style="top:122.0px">9</div>
<div class="cl code" style="top:122.0px"><span class="k">using</span> <span class="n">System</span>.<span class="n">Runtime</span>.<span class="n">CompilerServices</span>;</div>
<div class="ln code" style="top:137.0px">10</div>
<div class="cl code" style="top:137.0px"><span class="k">using</span> <span class="n">System</span>.<span class="n">Runtime</span>.<span class="n">InteropServices</span>;</div>
<div class="ln code" style="top:152.0px">11</div>
<div class="cl code" style="top:152.0px"><span class="k">using</span> <span class="n">System</span>.<span class="n">Runtime</span>.<span class="n">Versioning</span>;</div>
<div class="ln code" style="top:167.0px">12</div>
<div class="cl code" style="top:167.0px"></div>
<div class="ln code" style="top:182.0px">13</div>
<div class="cl code" style="top:182.0px">[<span class="k">assembly</span>: <span class="t">AssemblyVersion</span>(<span class="s">"1.0.0.0"</span>)]</div>
<div class="ln code" style="top:197.0px">14</div>
<div class="cl code" style="top:197.0px">[<span class="k">assembly</span>: <span class="t">Debuggable</span>(<span class="t">DebuggableAttribute</span>.<span class="e">DebuggingModes</span>.<span class="f">Default</span> | <span class="t">DebuggableAttribute</span>.<span class="e">DebuggingModes</span>.<span class="f">DisableOptimizations</span>)]</div>
<div class="ln code" style="top:212.0px">15</div>
<div class="cl code" style="top:212.0px">[<span class="k">assembly</span>: <span class="t">AssemblyCompany</span>(<span class="s">""</span>)]</div>
<div class="ln code" style="top:227.0px">16</div>
<div class="cl code" style="top:227.0px">[<span class="k">assembly</span>: <span class="t">AssemblyConfiguration</span>(<span class="s">""</span>)]</div>
<div class="ln code" style="top:242.0px">17</div>
<div class="cl code" style="top:242.0px">[<span class="k">assembly</span>: <span class="t">AssemblyCopyright</span>(<span class="s">"Copyright ©  2018"</span>)]</div>
<div class="ln code" style="top:257.0px">18</div>
<div class="cl code" style="top:257.0px">[<span class="k">assembly</span>: <span class="t">AssemblyDescription</span>(<span class="s">""</span>)]</div>
<div class="ln code" style="top:272.0px">19</div>
<div class="cl code" style="top:272.0px">[<span class="k">assembly</span>: <span class="t">AssemblyFileVersion</span>(<span class="s">"1.0.0.0"</span>)]</div>
<div class="ln code" style="top:287.0px">20</div>
<div class="cl code" style="top:287.0px">[<span class="k">assembly</span>: <span class="t">AssemblyProduct</span>(<span class="s">"Elfie_city"</span>)]</div>
<div class="ln code" style="top:302.0px">21</div>
<div class="cl code" style="top:302.0px">[<span class="k">assembly</span>: <span class="t">AssemblyTitle</span>(<span class="s">"Elfie_city"</span>)]</div>
<div class="ln code" style="top:317.0px">22</div>
<div class="cl code" style="top:317.0px">[<span class="k">assembly</span>: <span class="t">AssemblyTrademark</span>(<span class="s">""</span>)]</div>
<div class="ln code" style="top:332.0px">23</div>
<div class="cl code" style="top:332.0px">[<span class="k">assembly</span>: <span class="t">CompilationRelaxations</span>(<span class="num">8</span>)]</div>
<div class="ln code" style="top:347.0px">24</div>
<div class="cl code" style="top:347.0px">[<span class="k">assembly</span>: <span class="t">RuntimeCompatibility</span>(<span class="p">WrapNonExceptionThrows</span> = <span class="k">true</span>)]</div>
<div class="ln code" style="top:362.0px">25</div>
<div class="cl code" style="top:362.0px">[<span class="k">assembly</span>: <span class="t">ComVisible</span>(<span class="k">false</span>)]</div>
<div class="ln code" style="top:377.0px">26</div>
<div class="cl code" style="top:377.0px">[<span class="k">assembly</span>: <span class="t">Guid</span>(<span class="s">"3eeb6dbb-1aa5-4c76-9d52-a6c76b8e8e13"</span>)]</div>
<div class="ln code" style="top:392.0px">27</div>
<div class="cl code" style="top:392.0px">[<span class="k">assembly</span>: <span class="t">TargetFramework</span>(<span class="s">".NETFramework,Version=v4.0"</span>, <span class="p">FrameworkDisplayName</span> = <span class="s">".NET Framework 4"</span>)]</div>
<div class="ln code" style="top:407.0px">28</div>
<div class="cl code" style="top:407.0px"></div>
</div>
</body></html>
